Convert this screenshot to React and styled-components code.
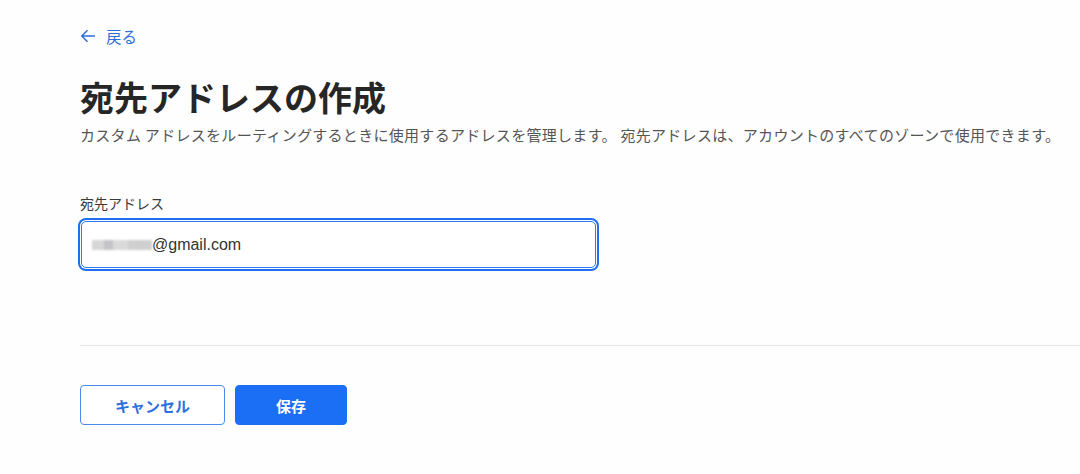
import React from "react";
import styled, { createGlobalStyle } from "styled-components";

const GlobalStyle = createGlobalStyle`
  html, body {
    margin: 0;
    padding: 0;
    background: #fefefe;
  }
  body {
    font-family: "Noto Sans CJK JP", "Noto Sans", sans-serif;
    color: #333;
  }
`;

const Page = styled.div`
  padding: 24px 0 0 80px;
  min-height: 474px;
  box-sizing: border-box;
`;

const BackLink = styled.a`
  display: inline-flex;
  align-items: center;
  gap: 10px;
  color: #2f6fdc;
  font-size: 15.5px;
  line-height: 22px;
  text-decoration: none;
  cursor: pointer;
`;

const Title = styled.h1`
  margin: 27px 0 0;
  font-size: 34px;
  font-weight: 700;
  line-height: 44px;
  color: #262626;
`;

const Description = styled.p`
  margin: 5px 0 0;
  font-size: 15px;
  line-height: 22px;
  letter-spacing: 0.3px;
  color: #555;
`;

const Field = styled.div`
  display: flex;
  flex-direction: column;
  gap: 8px;
  margin-top: 47px;
  width: 516px;
`;

const Label = styled.label`
  font-size: 14px;
  line-height: 20px;
  color: #3a3a3a;
`;

const InputBox = styled.div`
  display: flex;
  align-items: center;
  height: 45px;
  padding: 0 10px;
  margin-left: 1px;
  border: 1px solid #2d7bf0;
  border-radius: 5px;
  background: #fff;
  box-shadow: 0 0 0 1px #fff, 0 0 0 3px #1f6ff0;
  font-family: "Liberation Sans", "Noto Sans CJK JP", sans-serif;
  font-size: 16px;
  color: #333;
`;

const Masked = styled.span`
  display: inline-block;
  width: 60px;
  height: 10px;
  background: linear-gradient(90deg, #d6d6d6 0 20%, #c4c4c8 20% 35%, #dadada 35% 60%, #cfcfcf 60% 100%);
  filter: blur(1px);
`;

const Divider = styled.hr`
  margin: 77px 0 0;
  border: 0;
  border-top: 1px solid #e4e4e4;
`;

const Actions = styled.div`
  display: flex;
  gap: 10px;
  margin-top: 39px;
`;

const Button = styled.button`
  height: 40px;
  width: ${(p) => p.$width}px;
  border-radius: 4px;
  font-family: "Noto Sans CJK JP", sans-serif;
  font-size: 15px;
  font-weight: 700;
  cursor: pointer;
  border: 1px solid ${(p) => (p.$primary ? "#1a6ff4" : "#4a8af0")};
  background: ${(p) => (p.$primary ? "#1a6ff4" : "#fff")};
  color: ${(p) => (p.$primary ? "#fff" : "#2f6fdc")};
`;

const ArrowLeft = () => (
  <svg width="16" height="14" viewBox="0 0 16 14" fill="none" stroke="currentColor" strokeWidth="1.5">
    <path d="M15 7H1.8M7.5 1.3L1.8 7l5.7 5.7" />
  </svg>
);

export default function App() {
  return (
    <>
      <GlobalStyle />
      <Page>
        <BackLink>
          <ArrowLeft />
          戻る
        </BackLink>
        <Title>宛先アドレスの作成</Title>
        <Description>
          カスタム アドレスをルーティングするときに使用するアドレスを管理します。 宛先アドレスは、アカウントのすべてのゾーンで使用できます。
        </Description>
        <Field>
          <Label>宛先アドレス</Label>
          <InputBox>
            <Masked />
            @gmail.com
          </InputBox>
        </Field>
        <Divider />
        <Actions>
          <Button $width={145}>キャンセル</Button>
          <Button $primary $width={112}>保存</Button>
        </Actions>
      </Page>
    </>
  );
}
